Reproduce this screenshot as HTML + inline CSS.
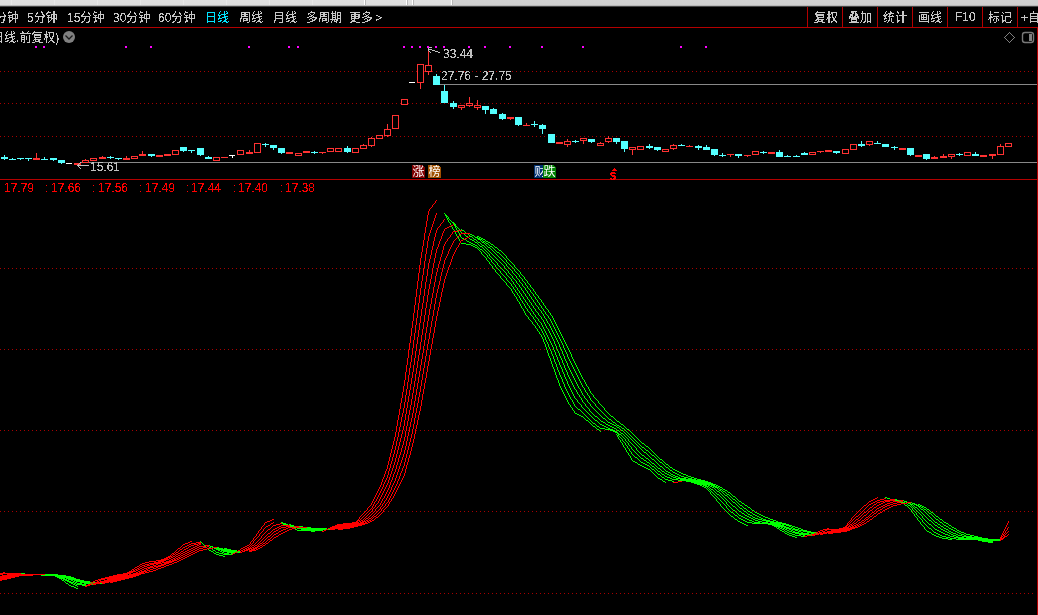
<!DOCTYPE html>
<html><head><meta charset="utf-8"><title>chart</title>
<style>
html,body{margin:0;padding:0;background:#000;}
body{width:1038px;height:615px;position:relative;overflow:hidden;font-family:"Liberation Sans","Noto Sans CJK SC",sans-serif;}
#top{position:absolute;left:0;top:0;width:1038px;height:8px;background:linear-gradient(#e0e0e0 0,#dedede 4.8px,#a8a8a8 5.8px,#383838 6.6px,#000 7.2px);}
#top i.f{background:#e7e7e7;box-shadow:none}
#top b{position:absolute;left:451px;top:0;width:587px;height:5px;background:rgba(0,0,0,0.06)}
#top i{position:absolute;top:0;width:1px;height:5px;background:#fff;box-shadow:1px 0 0 #b8b8b8}
svg{position:absolute;left:0;top:0}
#txt{position:absolute;left:0;top:0;width:1038px;height:615px;will-change:transform;filter:url(#thr)}
.t{position:absolute;font-size:12px;line-height:14px;white-space:nowrap;color:#c8c8c8;}
.tb{top:11px}
.cy{color:#00e4ff}
.n{position:absolute;font-size:12px;line-height:14px;white-space:nowrap;}
.b{position:absolute;top:165px;width:13px;height:13px;font-size:12px;line-height:15px;clip-path:polygon(0 0,10px 0,13px 3px,13px 13px,0 13px);color:#fff;overflow:hidden;text-align:center;white-space:nowrap}
</style></head><body>
<div id="top"><b></b><i class="f" style="left:11px"></i><i class="f" style="left:54px"></i><i class="f" style="left:97px"></i><i class="f" style="left:140px"></i><i class="f" style="left:183px"></i><i class="f" style="left:226px"></i><i class="f" style="left:269px"></i><i class="f" style="left:312px"></i><i style="left:364px"></i><i style="left:406px"></i><i style="left:412px"></i><i style="left:451px"></i></div>
<svg width="1038" height="615" viewBox="0 0 1038 615" shape-rendering="crispEdges">
<defs><filter id="thr" x="0" y="0" width="100%" height="100%" color-interpolation-filters="sRGB"><feComponentTransfer><feFuncA type="discrete" tableValues="0 0 0 0 1 1 1 1 1"/></feComponentTransfer></filter></defs>
<path d="M0 71.5H1033" stroke="#a80000" stroke-width="1" stroke-dasharray="1 3" fill="none"/>
<path d="M0 103.5H1033" stroke="#a80000" stroke-width="1" stroke-dasharray="1 3" fill="none"/>
<path d="M0 136.5H1033" stroke="#a80000" stroke-width="1" stroke-dasharray="1 3" fill="none"/>
<path d="M0 268.5H1033" stroke="#a80000" stroke-width="1" stroke-dasharray="1 3" fill="none"/>
<path d="M0 349.5H1033" stroke="#a80000" stroke-width="1" stroke-dasharray="1 3" fill="none"/>
<path d="M0 430.5H1033" stroke="#a80000" stroke-width="1" stroke-dasharray="1 3" fill="none"/>
<path d="M0 511.5H1033" stroke="#a80000" stroke-width="1" stroke-dasharray="1 3" fill="none"/>
<path d="M0 593.5H1033" stroke="#a80000" stroke-width="1" stroke-dasharray="1 3" fill="none"/>
<rect x="440" y="84" width="597" height="1" fill="#888888"/>
<rect x="81" y="162" width="956" height="1" fill="#888888"/>
<rect x="0" y="27" width="1038" height="1" fill="#b40000"/>
<rect x="0" y="179" width="1038" height="1" fill="#b40000"/>
<rect x="1037" y="27" width="1" height="588" fill="#b40000"/>
<rect x="807" y="7" width="1" height="20" fill="#b40000"/>
<rect x="842" y="7" width="1" height="20" fill="#b40000"/>
<rect x="877" y="7" width="1" height="20" fill="#b40000"/>
<rect x="912" y="7" width="1" height="20" fill="#b40000"/>
<rect x="947" y="7" width="1" height="20" fill="#b40000"/>
<rect x="982" y="7" width="1" height="20" fill="#b40000"/>
<rect x="1017" y="7" width="1" height="20" fill="#b40000"/>
<rect x="35" y="46" width="2" height="2" fill="#ff00ff"/>
<rect x="43" y="46" width="2" height="2" fill="#ff00ff"/>
<rect x="125" y="46" width="2" height="2" fill="#ff00ff"/>
<rect x="150" y="46" width="2" height="2" fill="#ff00ff"/>
<rect x="248" y="46" width="2" height="2" fill="#ff00ff"/>
<rect x="288" y="46" width="2" height="2" fill="#ff00ff"/>
<rect x="297" y="46" width="2" height="2" fill="#ff00ff"/>
<rect x="403" y="46" width="2" height="2" fill="#ff00ff"/>
<rect x="411" y="46" width="2" height="2" fill="#ff00ff"/>
<rect x="419" y="46" width="2" height="2" fill="#ff00ff"/>
<rect x="427" y="46" width="2" height="2" fill="#ff00ff"/>
<rect x="435" y="46" width="2" height="2" fill="#ff00ff"/>
<rect x="443" y="46" width="2" height="2" fill="#ff00ff"/>
<rect x="468" y="46" width="2" height="2" fill="#ff00ff"/>
<rect x="484" y="46" width="2" height="2" fill="#ff00ff"/>
<rect x="509" y="46" width="2" height="2" fill="#ff00ff"/>
<rect x="541" y="46" width="2" height="2" fill="#ff00ff"/>
<rect x="582" y="46" width="2" height="2" fill="#ff00ff"/>
<rect x="680" y="46" width="2" height="2" fill="#ff00ff"/>
<rect x="705" y="46" width="2" height="2" fill="#ff00ff"/>
<rect x="4" y="155" width="1" height="5" fill="#54ffff"/>
<rect x="1" y="157" width="7" height="2" fill="#54ffff"/>
<rect x="12" y="158" width="1" height="2" fill="#54ffff"/>
<rect x="9" y="159" width="7" height="1" fill="#54ffff"/>
<rect x="20" y="158" width="1" height="2" fill="#54ffff"/>
<rect x="17" y="158" width="7" height="1" fill="#54ffff"/>
<rect x="28" y="158" width="1" height="3" fill="#54ffff"/>
<rect x="25" y="158" width="7" height="1" fill="#54ffff"/>
<rect x="36" y="153" width="1" height="7" fill="#ff3232"/>
<rect x="33" y="158" width="7" height="2" fill="#ff3232"/>
<rect x="44" y="157" width="1" height="3" fill="#54ffff"/>
<rect x="41" y="159" width="7" height="1" fill="#54ffff"/>
<rect x="53" y="158" width="1" height="3" fill="#54ffff"/>
<rect x="50" y="158" width="7" height="2" fill="#54ffff"/>
<rect x="61" y="160" width="1" height="4" fill="#54ffff"/>
<rect x="58" y="160" width="7" height="3" fill="#54ffff"/>
<rect x="69" y="163" width="1" height="1" fill="#ffffff"/>
<rect x="66" y="163" width="6" height="1" fill="#ffffff"/>
<rect x="77" y="163" width="1" height="2" fill="#ff3232"/>
<rect x="74" y="163" width="7" height="2" fill="#ff3232"/>
<rect x="85" y="159" width="1" height="1" fill="#ff3232"/>
<rect x="82" y="160" width="7" height="3" fill="#ff3232"/>
<rect x="83" y="161" width="5" height="1" fill="#000"/>
<rect x="90" y="158" width="7" height="3" fill="#ff3232"/>
<rect x="91" y="159" width="5" height="1" fill="#000"/>
<rect x="102" y="156" width="1" height="3" fill="#ff3232"/>
<rect x="99" y="157" width="7" height="2" fill="#ff3232"/>
<rect x="110" y="156" width="1" height="3" fill="#54ffff"/>
<rect x="107" y="157" width="7" height="1" fill="#54ffff"/>
<rect x="118" y="158" width="1" height="2" fill="#54ffff"/>
<rect x="115" y="158" width="7" height="1" fill="#54ffff"/>
<rect x="126" y="156" width="1" height="4" fill="#ff3232"/>
<rect x="123" y="158" width="7" height="2" fill="#ff3232"/>
<rect x="131" y="156" width="7" height="3" fill="#ff3232"/>
<rect x="132" y="157" width="5" height="1" fill="#000"/>
<rect x="142" y="151" width="1" height="5" fill="#ff3232"/>
<rect x="139" y="154" width="7" height="2" fill="#ff3232"/>
<rect x="151" y="154" width="1" height="3" fill="#54ffff"/>
<rect x="148" y="154" width="7" height="2" fill="#54ffff"/>
<rect x="159" y="155" width="1" height="2" fill="#ff3232"/>
<rect x="156" y="155" width="7" height="2" fill="#ff3232"/>
<rect x="167" y="154" width="1" height="2" fill="#ff3232"/>
<rect x="164" y="154" width="7" height="2" fill="#ff3232"/>
<rect x="172" y="150" width="7" height="5" fill="#ff3232"/>
<rect x="173" y="151" width="5" height="3" fill="#000"/>
<rect x="183" y="147" width="1" height="5" fill="#54ffff"/>
<rect x="180" y="147" width="7" height="4" fill="#54ffff"/>
<rect x="191" y="150" width="1" height="3" fill="#54ffff"/>
<rect x="188" y="150" width="7" height="1" fill="#54ffff"/>
<rect x="200" y="148" width="1" height="8" fill="#54ffff"/>
<rect x="197" y="148" width="7" height="7" fill="#54ffff"/>
<rect x="208" y="156" width="1" height="3" fill="#54ffff"/>
<rect x="205" y="157" width="7" height="2" fill="#54ffff"/>
<rect x="213" y="157" width="7" height="4" fill="#ff3232"/>
<rect x="214" y="158" width="5" height="2" fill="#000"/>
<rect x="224" y="157" width="1" height="1" fill="#ff3232"/>
<rect x="221" y="157" width="7" height="1" fill="#ff3232"/>
<rect x="232" y="155" width="1" height="3" fill="#ffffff"/>
<rect x="229" y="155" width="6" height="1" fill="#ffffff"/>
<rect x="237" y="150" width="7" height="5" fill="#ff3232"/>
<rect x="238" y="151" width="5" height="3" fill="#000"/>
<rect x="249" y="150" width="1" height="4" fill="#ff3232"/>
<rect x="246" y="152" width="7" height="2" fill="#ff3232"/>
<rect x="254" y="143" width="7" height="10" fill="#ff3232"/>
<rect x="255" y="144" width="5" height="8" fill="#000"/>
<rect x="265" y="143" width="1" height="4" fill="#54ffff"/>
<rect x="262" y="144" width="7" height="1" fill="#54ffff"/>
<rect x="273" y="145" width="1" height="5" fill="#54ffff"/>
<rect x="270" y="145" width="7" height="3" fill="#54ffff"/>
<rect x="281" y="148" width="1" height="6" fill="#54ffff"/>
<rect x="278" y="148" width="7" height="5" fill="#54ffff"/>
<rect x="289" y="152" width="1" height="2" fill="#ff3232"/>
<rect x="286" y="152" width="7" height="2" fill="#ff3232"/>
<rect x="295" y="153" width="7" height="3" fill="#ff3232"/>
<rect x="296" y="154" width="5" height="1" fill="#000"/>
<rect x="306" y="151" width="1" height="2" fill="#ff3232"/>
<rect x="303" y="151" width="7" height="2" fill="#ff3232"/>
<rect x="314" y="151" width="1" height="3" fill="#54ffff"/>
<rect x="311" y="152" width="7" height="1" fill="#54ffff"/>
<rect x="322" y="152" width="1" height="2" fill="#ff3232"/>
<rect x="319" y="152" width="7" height="1" fill="#ff3232"/>
<rect x="327" y="148" width="7" height="4" fill="#ff3232"/>
<rect x="328" y="149" width="5" height="2" fill="#000"/>
<rect x="335" y="148" width="7" height="4" fill="#ff3232"/>
<rect x="336" y="149" width="5" height="2" fill="#000"/>
<rect x="347" y="146" width="1" height="7" fill="#54ffff"/>
<rect x="344" y="148" width="7" height="4" fill="#54ffff"/>
<rect x="352" y="148" width="7" height="5" fill="#ff3232"/>
<rect x="353" y="149" width="5" height="3" fill="#000"/>
<rect x="363" y="144" width="1" height="1" fill="#ff3232"/>
<rect x="360" y="145" width="7" height="4" fill="#ff3232"/>
<rect x="361" y="146" width="5" height="2" fill="#000"/>
<rect x="371" y="137" width="1" height="1" fill="#ff3232"/>
<rect x="371" y="146" width="1" height="1" fill="#ff3232"/>
<rect x="368" y="138" width="7" height="8" fill="#ff3232"/>
<rect x="369" y="139" width="5" height="6" fill="#000"/>
<rect x="376" y="135" width="7" height="4" fill="#ff3232"/>
<rect x="377" y="136" width="5" height="2" fill="#000"/>
<rect x="387" y="124" width="1" height="5" fill="#ff3232"/>
<rect x="387" y="136" width="1" height="1" fill="#ff3232"/>
<rect x="384" y="129" width="7" height="7" fill="#ff3232"/>
<rect x="385" y="130" width="5" height="5" fill="#000"/>
<rect x="392" y="115" width="7" height="14" fill="#ff3232"/>
<rect x="393" y="116" width="5" height="12" fill="#000"/>
<rect x="401" y="99" width="7" height="6" fill="#ff3232"/>
<rect x="402" y="100" width="5" height="4" fill="#000"/>
<rect x="412" y="82" width="1" height="1" fill="#ffffff"/>
<rect x="409" y="82" width="6" height="1" fill="#ffffff"/>
<rect x="420" y="83" width="1" height="6" fill="#ff3232"/>
<rect x="417" y="64" width="7" height="19" fill="#ff3232"/>
<rect x="418" y="65" width="5" height="17" fill="#000"/>
<rect x="428" y="48" width="1" height="17" fill="#ff3232"/>
<rect x="428" y="72" width="1" height="3" fill="#ff3232"/>
<rect x="425" y="65" width="7" height="7" fill="#ff3232"/>
<rect x="426" y="66" width="5" height="5" fill="#000"/>
<rect x="436" y="74" width="1" height="11" fill="#54ffff"/>
<rect x="433" y="76" width="7" height="9" fill="#54ffff"/>
<rect x="444" y="85" width="1" height="18" fill="#54ffff"/>
<rect x="441" y="91" width="7" height="12" fill="#54ffff"/>
<rect x="453" y="101" width="1" height="8" fill="#54ffff"/>
<rect x="450" y="103" width="7" height="4" fill="#54ffff"/>
<rect x="461" y="108" width="1" height="2" fill="#ff3232"/>
<rect x="458" y="105" width="7" height="3" fill="#ff3232"/>
<rect x="459" y="106" width="5" height="1" fill="#000"/>
<rect x="469" y="97" width="1" height="6" fill="#ff3232"/>
<rect x="469" y="106" width="1" height="1" fill="#ff3232"/>
<rect x="466" y="103" width="7" height="3" fill="#ff3232"/>
<rect x="467" y="104" width="5" height="1" fill="#000"/>
<rect x="477" y="100" width="1" height="5" fill="#ff3232"/>
<rect x="477" y="108" width="1" height="2" fill="#ff3232"/>
<rect x="474" y="105" width="7" height="3" fill="#ff3232"/>
<rect x="475" y="106" width="5" height="1" fill="#000"/>
<rect x="485" y="106" width="1" height="8" fill="#54ffff"/>
<rect x="482" y="106" width="7" height="4" fill="#54ffff"/>
<rect x="493" y="108" width="1" height="6" fill="#54ffff"/>
<rect x="490" y="109" width="7" height="5" fill="#54ffff"/>
<rect x="502" y="113" width="1" height="7" fill="#54ffff"/>
<rect x="499" y="114" width="7" height="5" fill="#54ffff"/>
<rect x="510" y="117" width="1" height="3" fill="#ff3232"/>
<rect x="507" y="117" width="7" height="2" fill="#ff3232"/>
<rect x="518" y="117" width="1" height="9" fill="#54ffff"/>
<rect x="515" y="117" width="7" height="8" fill="#54ffff"/>
<rect x="526" y="123" width="1" height="3" fill="#ff3232"/>
<rect x="523" y="125" width="7" height="1" fill="#ff3232"/>
<rect x="534" y="121" width="1" height="6" fill="#54ffff"/>
<rect x="531" y="124" width="7" height="1" fill="#54ffff"/>
<rect x="542" y="124" width="1" height="10" fill="#54ffff"/>
<rect x="539" y="125" width="7" height="4" fill="#54ffff"/>
<rect x="551" y="134" width="1" height="9" fill="#54ffff"/>
<rect x="548" y="134" width="7" height="9" fill="#54ffff"/>
<rect x="559" y="142" width="1" height="2" fill="#ff3232"/>
<rect x="556" y="142" width="7" height="2" fill="#ff3232"/>
<rect x="567" y="139" width="1" height="2" fill="#ff3232"/>
<rect x="567" y="145" width="1" height="2" fill="#ff3232"/>
<rect x="564" y="141" width="7" height="4" fill="#ff3232"/>
<rect x="565" y="142" width="5" height="2" fill="#000"/>
<rect x="575" y="140" width="1" height="3" fill="#54ffff"/>
<rect x="572" y="141" width="7" height="1" fill="#54ffff"/>
<rect x="583" y="141" width="1" height="3" fill="#ff3232"/>
<rect x="580" y="138" width="7" height="3" fill="#ff3232"/>
<rect x="581" y="139" width="5" height="1" fill="#000"/>
<rect x="591" y="139" width="1" height="4" fill="#54ffff"/>
<rect x="588" y="139" width="7" height="3" fill="#54ffff"/>
<rect x="600" y="142" width="1" height="1" fill="#ff3232"/>
<rect x="597" y="143" width="7" height="3" fill="#ff3232"/>
<rect x="598" y="144" width="5" height="1" fill="#000"/>
<rect x="608" y="136" width="1" height="2" fill="#ff3232"/>
<rect x="608" y="142" width="1" height="1" fill="#ff3232"/>
<rect x="605" y="138" width="7" height="4" fill="#ff3232"/>
<rect x="606" y="139" width="5" height="2" fill="#000"/>
<rect x="616" y="138" width="1" height="6" fill="#54ffff"/>
<rect x="613" y="138" width="7" height="4" fill="#54ffff"/>
<rect x="624" y="141" width="1" height="11" fill="#54ffff"/>
<rect x="621" y="141" width="7" height="8" fill="#54ffff"/>
<rect x="632" y="150" width="1" height="5" fill="#ff3232"/>
<rect x="629" y="147" width="7" height="3" fill="#ff3232"/>
<rect x="630" y="148" width="5" height="1" fill="#000"/>
<rect x="637" y="146" width="7" height="4" fill="#ff3232"/>
<rect x="638" y="147" width="5" height="2" fill="#000"/>
<rect x="649" y="144" width="1" height="5" fill="#54ffff"/>
<rect x="646" y="146" width="7" height="2" fill="#54ffff"/>
<rect x="657" y="147" width="1" height="4" fill="#54ffff"/>
<rect x="654" y="147" width="7" height="3" fill="#54ffff"/>
<rect x="662" y="149" width="7" height="3" fill="#ff3232"/>
<rect x="663" y="150" width="5" height="1" fill="#000"/>
<rect x="673" y="144" width="1" height="1" fill="#ff3232"/>
<rect x="673" y="149" width="1" height="1" fill="#ff3232"/>
<rect x="670" y="145" width="7" height="4" fill="#ff3232"/>
<rect x="671" y="146" width="5" height="2" fill="#000"/>
<rect x="681" y="144" width="1" height="2" fill="#54ffff"/>
<rect x="678" y="145" width="7" height="1" fill="#54ffff"/>
<rect x="689" y="145" width="1" height="2" fill="#ff3232"/>
<rect x="686" y="146" width="7" height="1" fill="#ff3232"/>
<rect x="698" y="145" width="1" height="5" fill="#54ffff"/>
<rect x="695" y="146" width="7" height="2" fill="#54ffff"/>
<rect x="706" y="145" width="1" height="5" fill="#54ffff"/>
<rect x="703" y="147" width="7" height="3" fill="#54ffff"/>
<rect x="714" y="149" width="1" height="7" fill="#54ffff"/>
<rect x="711" y="149" width="7" height="6" fill="#54ffff"/>
<rect x="722" y="153" width="1" height="4" fill="#54ffff"/>
<rect x="719" y="155" width="7" height="1" fill="#54ffff"/>
<rect x="730" y="154" width="1" height="3" fill="#ff3232"/>
<rect x="727" y="154" width="7" height="1" fill="#ff3232"/>
<rect x="738" y="154" width="1" height="4" fill="#54ffff"/>
<rect x="735" y="154" width="7" height="2" fill="#54ffff"/>
<rect x="747" y="155" width="1" height="2" fill="#ff3232"/>
<rect x="744" y="155" width="7" height="1" fill="#ff3232"/>
<rect x="752" y="151" width="7" height="4" fill="#ff3232"/>
<rect x="753" y="152" width="5" height="2" fill="#000"/>
<rect x="763" y="151" width="1" height="3" fill="#54ffff"/>
<rect x="760" y="152" width="7" height="1" fill="#54ffff"/>
<rect x="771" y="152" width="1" height="2" fill="#ff3232"/>
<rect x="768" y="152" width="7" height="2" fill="#ff3232"/>
<rect x="779" y="150" width="1" height="7" fill="#54ffff"/>
<rect x="776" y="152" width="7" height="5" fill="#54ffff"/>
<rect x="787" y="155" width="1" height="2" fill="#54ffff"/>
<rect x="784" y="156" width="7" height="1" fill="#54ffff"/>
<rect x="796" y="155" width="1" height="2" fill="#54ffff"/>
<rect x="793" y="156" width="7" height="1" fill="#54ffff"/>
<rect x="804" y="152" width="1" height="3" fill="#54ffff"/>
<rect x="801" y="153" width="7" height="2" fill="#54ffff"/>
<rect x="809" y="152" width="7" height="3" fill="#ff3232"/>
<rect x="810" y="153" width="5" height="1" fill="#000"/>
<rect x="820" y="151" width="1" height="2" fill="#ff3232"/>
<rect x="817" y="151" width="7" height="1" fill="#ff3232"/>
<rect x="828" y="150" width="1" height="2" fill="#ff3232"/>
<rect x="825" y="150" width="7" height="2" fill="#ff3232"/>
<rect x="836" y="151" width="1" height="3" fill="#54ffff"/>
<rect x="833" y="151" width="7" height="2" fill="#54ffff"/>
<rect x="842" y="149" width="7" height="5" fill="#ff3232"/>
<rect x="843" y="150" width="5" height="3" fill="#000"/>
<rect x="850" y="144" width="7" height="6" fill="#ff3232"/>
<rect x="851" y="145" width="5" height="4" fill="#000"/>
<rect x="861" y="141" width="1" height="6" fill="#54ffff"/>
<rect x="858" y="144" width="7" height="2" fill="#54ffff"/>
<rect x="869" y="145" width="1" height="1" fill="#ff3232"/>
<rect x="866" y="141" width="7" height="4" fill="#ff3232"/>
<rect x="867" y="142" width="5" height="2" fill="#000"/>
<rect x="877" y="141" width="1" height="3" fill="#54ffff"/>
<rect x="874" y="143" width="7" height="1" fill="#54ffff"/>
<rect x="885" y="144" width="1" height="3" fill="#54ffff"/>
<rect x="882" y="144" width="7" height="3" fill="#54ffff"/>
<rect x="894" y="146" width="1" height="4" fill="#54ffff"/>
<rect x="891" y="147" width="7" height="1" fill="#54ffff"/>
<rect x="902" y="148" width="1" height="2" fill="#ff3232"/>
<rect x="899" y="148" width="7" height="2" fill="#ff3232"/>
<rect x="910" y="148" width="1" height="8" fill="#54ffff"/>
<rect x="907" y="148" width="7" height="7" fill="#54ffff"/>
<rect x="918" y="155" width="1" height="2" fill="#ff3232"/>
<rect x="915" y="155" width="7" height="2" fill="#ff3232"/>
<rect x="926" y="154" width="1" height="6" fill="#54ffff"/>
<rect x="923" y="154" width="7" height="5" fill="#54ffff"/>
<rect x="934" y="156" width="1" height="3" fill="#ff3232"/>
<rect x="931" y="157" width="7" height="2" fill="#ff3232"/>
<rect x="943" y="154" width="1" height="4" fill="#ff3232"/>
<rect x="940" y="156" width="7" height="2" fill="#ff3232"/>
<rect x="951" y="157" width="1" height="2" fill="#ff3232"/>
<rect x="948" y="154" width="7" height="3" fill="#ff3232"/>
<rect x="949" y="155" width="5" height="1" fill="#000"/>
<rect x="959" y="153" width="1" height="3" fill="#54ffff"/>
<rect x="956" y="154" width="7" height="1" fill="#54ffff"/>
<rect x="964" y="152" width="7" height="4" fill="#ff3232"/>
<rect x="965" y="153" width="5" height="2" fill="#000"/>
<rect x="975" y="152" width="1" height="4" fill="#54ffff"/>
<rect x="972" y="154" width="7" height="2" fill="#54ffff"/>
<rect x="983" y="155" width="1" height="2" fill="#ff3232"/>
<rect x="980" y="155" width="7" height="2" fill="#ff3232"/>
<rect x="992" y="154" width="1" height="5" fill="#ff3232"/>
<rect x="989" y="154" width="7" height="2" fill="#ff3232"/>
<rect x="1000" y="144" width="1" height="2" fill="#ff3232"/>
<rect x="997" y="146" width="7" height="9" fill="#ff3232"/>
<rect x="998" y="147" width="5" height="7" fill="#000"/>
<rect x="1005" y="143" width="7" height="4" fill="#ff3232"/>
<rect x="1006" y="144" width="5" height="2" fill="#000"/>
<path d="M21 573.5h4M41 575.5h25M45 574.5h13M55 576.5h16M57 577.5h17M59 578.5h6M61 579.5h1M62 580.5h2M63 579.5h4M64 581.5h1M65 580.5h4M65 582.5h1M66 578.5h10M66 583.5h2M67 581.5h4M68 579.5h12M68 584.5h1M69 582.5h5M69 585.5h2M71 580.5h2M71 583.5h2M71 586.5h3M73 581.5h2M73 584.5h2M74 580.5h10M74 583.5h2M74 587.5h2M75 582.5h2M75 585.5h2M76 581.5h14M76 584.5h10M76 588.5h2M77 583.5h5M77 586.5h1M80 582.5h11M82 585.5h4M84 583.5h6M91 583.5h1M92 584.5h1M93 582.5h2M100 583.5h2M200 541.5h1M201 542.5h1M202 543.5h1M203 544.5h1M204 545.5h1M205 546.5h1M208 549.5h1M209 545.5h1M209 547.5h2M209 550.5h2M210 546.5h3M211 551.5h2M212 547.5h1M212 549.5h1M213 550.5h2M213 552.5h1M214 548.5h9M214 553.5h2M215 551.5h1M216 549.5h15M216 552.5h3M216 554.5h3M217 547.5h2M218 550.5h2M219 553.5h4M219 555.5h4M220 551.5h2M221 550.5h16M222 552.5h2M223 551.5h14M223 554.5h9M223 556.5h2M224 548.5h3M224 553.5h5M227 552.5h8M231 553.5h2M237 552.5h3M238 551.5h2M281 522.5h2M282 523.5h4M283 524.5h5M289 524.5h2M290 525.5h4M290 526.5h4M294 527.5h2M295 529.5h2M297 528.5h30M297 530.5h26M299 526.5h4M301 529.5h25M307 527.5h4M311 531.5h4M328 529.5h2M444 213.5h1M445.5 214v2M446.5 215v3M447 216.5h1M447 218.5h2M447 219.5h1M448 217.5h1M448.5 220v2M449 219.5h1M449 222.5h1M450 220.5h1M450.5 223v2M451 221.5h1M451 226.5h1M452 222.5h2M452.5 227v2M453 223.5h2M453 229.5h1M454 224.5h2M454 225.5h2M454 230.5h1M455 226.5h2M455 227.5h1M455.5 232v2M456.5 228v2M456.5 234v2M457 227.5h1M457 230.5h1M457 236.5h1M458 228.5h1M458.5 231v2M458.5 237v2M459 229.5h1M459.5 233v2M459.5 239v2M460 231.5h1M460.5 235v2M461 229.5h1M461 232.5h1M461 237.5h1M461 243.5h5M462 230.5h2M462 238.5h2M464 231.5h1M464 234.5h1M465 232.5h1M465 235.5h1M465 239.5h1M466 236.5h2M466 240.5h1M466 244.5h5M467 241.5h2M468 234.5h1M469 235.5h1M469 238.5h1M469 242.5h2M470 234.5h2M470 236.5h2M470 239.5h2M471 243.5h2M471 245.5h2M472 235.5h2M472 237.5h1M472 240.5h2M473 238.5h1M473 244.5h2M473 246.5h2M474 236.5h1M474 239.5h2M474 241.5h1M475 237.5h3M475 242.5h2M475 245.5h2M475 247.5h2M476 240.5h1M477 236.5h2M477 238.5h3M477 241.5h1M477 243.5h1M477 246.5h1M477 248.5h1M478 239.5h4M478 242.5h2M478 244.5h1M478 247.5h1M478 249.5h1M479 237.5h2M479 245.5h1M479 248.5h1M479 250.5h1M480 240.5h1M480 243.5h1M480 246.5h2M480 249.5h2M480 251.5h1M481 238.5h2M481 241.5h1M481 244.5h1M481.5 252v2M482 240.5h1M482 242.5h2M482 245.5h2M482 247.5h1M482 250.5h1M482 254.5h1M483 239.5h2M483 241.5h2M483 248.5h1M483 251.5h1M483 255.5h1M484 243.5h1M484 246.5h1M484 249.5h1M484 252.5h1M484 256.5h1M485 240.5h1M485 242.5h1M485 244.5h1M485 247.5h1M485 250.5h1M485 253.5h1M485 257.5h1M486 241.5h2M486 243.5h2M486 245.5h1M486 248.5h1M486 251.5h1M486 254.5h1M486.5 258v2M487 246.5h1M487 249.5h1M487 252.5h1M487.5 255v2M487 260.5h1M488 242.5h2M488 244.5h1M488 247.5h2M488 250.5h1M488 253.5h1M488 257.5h1M488 261.5h1M489 245.5h1M489 251.5h1M489.5 254v2M489 258.5h1M489.5 262v2M490 243.5h1M490 246.5h2M490 248.5h1M490 252.5h1M490 256.5h1M490 259.5h1M490 264.5h1M491 244.5h2M491 249.5h1M491 253.5h1M491 257.5h1M491.5 260v2M491 265.5h1M492 247.5h1M492 250.5h1M492 254.5h1M492 258.5h1M492 262.5h1M492.5 266v2M493 245.5h1M493 248.5h1M493 251.5h1M493 255.5h1M493 259.5h1M493 263.5h1M493 268.5h1M494 246.5h1M494 249.5h1M494 252.5h1M494 256.5h1M494 260.5h1M494 264.5h1M494 269.5h1M495 247.5h2M495 250.5h1M495 253.5h1M495 257.5h1M495 261.5h1M495.5 265v2M495.5 270v2M496 251.5h1M496 254.5h1M496 258.5h1M496 262.5h1M496 267.5h1M496 272.5h1M497 248.5h1M497 252.5h2M497 255.5h1M497 259.5h1M497.5 263v2M497 268.5h1M497 273.5h1M498 249.5h1M498 256.5h1M498 260.5h1M498 265.5h1M498 269.5h1M498 274.5h1M499 250.5h2M499 253.5h1M499 257.5h1M499 261.5h1M499 266.5h1M499 270.5h1M499 275.5h1M500 254.5h1M500 258.5h1M500 262.5h1M500 267.5h1M500.5 271v2M500.5 276v2M501 251.5h1M501 255.5h1M501 259.5h1M501 263.5h1M501 268.5h1M501 273.5h1M501 278.5h1M502 252.5h1M502 256.5h1M502 260.5h1M502 264.5h1M502 269.5h1M502 274.5h1M502 279.5h1M503 253.5h1M503 257.5h1M503 261.5h1M503 265.5h1M503 270.5h1M503 275.5h1M503 280.5h1M504 254.5h1M504 258.5h1M504 262.5h1M504.5 266v2M504 271.5h1M504 276.5h1M504 281.5h1M505 255.5h1M505 259.5h1M505 263.5h1M505 268.5h1M505 272.5h1M505 277.5h1M505 282.5h1M506.5 256v2M506.5 260v2M506.5 264v2M506 269.5h1M506.5 273v2M506.5 278v2M506.5 283v2M507 258.5h1M507 262.5h1M507 266.5h1M507 270.5h1M507 275.5h1M507 280.5h1M507 285.5h1M508 259.5h1M508 263.5h1M508 267.5h1M508.5 271v2M508 276.5h1M508 281.5h1M508 286.5h1M509 260.5h1M509 264.5h1M509 268.5h1M509 273.5h1M509 277.5h1M509 282.5h1M509 287.5h1M510 261.5h1M510 265.5h1M510 269.5h1M510 274.5h1M510 278.5h1M510 283.5h1M510 288.5h1M511 262.5h1M511 266.5h1M511 270.5h1M511 275.5h1M511.5 279v2M511.5 284v2M511.5 289v2M512 263.5h1M512 267.5h1M512.5 271v2M512.5 276v2M512 281.5h1M512 286.5h1M512.5 291v2M513 264.5h1M513 268.5h1M513 273.5h1M513 278.5h1M513.5 282v2M513.5 287v2M513 293.5h1M514.5 265v2M514.5 269v2M514 274.5h1M514 279.5h1M514 284.5h1M514 289.5h1M514.5 294v2M515 267.5h1M515 271.5h1M515 275.5h1M515 280.5h1M515.5 285v2M515.5 290v2M515 296.5h1M516 268.5h1M516 272.5h1M516.5 276v2M516.5 281v2M516 287.5h1M516 292.5h1M516.5 297v2M517 269.5h1M517 273.5h1M517 278.5h1M517 283.5h1M517.5 288v2M517.5 293v2M517.5 299v2M518 270.5h1M518 274.5h1M518 279.5h1M518 284.5h1M518 290.5h1M518 295.5h1M518 301.5h1M519 271.5h1M519.5 275v2M519.5 280v2M519.5 285v2M519.5 291v2M519.5 296v2M519.5 302v2M520.5 272v2M520 277.5h1M520 282.5h1M520 287.5h1M520 293.5h1M520.5 298v2M520.5 304v2M521 274.5h1M521 278.5h1M521 283.5h1M521.5 288v2M521.5 294v2M521 300.5h1M521.5 306v2M522 275.5h1M522.5 279v2M522.5 284v2M522 290.5h1M522 296.5h1M522.5 301v2M522 308.5h1M523 276.5h1M523 281.5h1M523 286.5h1M523.5 291v2M523.5 297v2M523 303.5h1M523.5 309v2M524.5 277v2M524 282.5h1M524 287.5h1M524 293.5h1M524 299.5h1M524.5 304v2M524.5 311v2M525 279.5h1M525.5 283v2M525.5 288v2M525.5 294v2M525.5 300v2M525.5 306v2M525.5 313v2M526 280.5h1M526 285.5h1M526 290.5h1M526 296.5h1M526 302.5h1M526 308.5h1M526 315.5h1M527.5 281v2M527.5 286v2M527.5 291v2M527.5 297v2M527.5 303v2M527.5 309v2M527 316.5h1M528 283.5h1M528 288.5h1M528 293.5h1M528 299.5h1M528 305.5h1M528 311.5h1M528.5 317v2M529 284.5h1M529 289.5h1M529.5 294v2M529.5 300v2M529.5 306v2M529 312.5h1M529 319.5h1M530.5 285v2M530.5 290v2M530 296.5h1M530 302.5h1M530 308.5h1M530.5 313v2M530 320.5h1M531 287.5h1M531 292.5h1M531.5 297v2M531.5 303v2M531.5 309v2M531 315.5h1M531 321.5h1M532 288.5h1M532 293.5h1M532 299.5h1M532 305.5h1M532 311.5h1M532 316.5h1M532.5 322v2M533.5 289v2M533.5 294v2M533.5 300v2M533.5 306v2M533.5 312v2M533.5 317v2M533 324.5h1M534 291.5h1M534 296.5h1M534 302.5h1M534 308.5h1M534 314.5h1M534 319.5h1M534 325.5h1M535.5 292v2M535.5 297v2M535.5 303v2M535.5 309v2M535.5 315v2M535.5 320v2M535.5 326v2M536 294.5h1M536 299.5h1M536 305.5h1M536 311.5h1M536 317.5h1M536 322.5h1M536 328.5h1M537 295.5h1M537.5 300v2M537 306.5h1M537 312.5h1M537 318.5h1M537.5 323v2M537.5 329v2M538.5 296v2M538 302.5h1M538.5 307v2M538.5 313v2M538.5 319v2M538 325.5h1M538 331.5h1M539 298.5h1M539.5 303v2M539 309.5h1M539 315.5h1M539 321.5h1M539.5 326v2M539.5 332v2M540 299.5h1M540 305.5h1M540 310.5h1M540 316.5h1M540 322.5h1M540 328.5h1M540 334.5h1M541.5 300v2M541.5 306v2M541.5 311v2M541.5 317v2M541.5 323v2M541.5 329v2M541.5 335v2M542 302.5h1M542 308.5h1M542 313.5h1M542 319.5h1M542.5 325v2M542.5 331v2M542.5 337v2M543.5 303v2M543.5 309v2M543.5 314v2M543.5 320v2M543.5 327v2M543.5 333v2M543.5 339v3M544 305.5h1M544 311.5h1M544.5 316v2M544.5 322v2M544.5 329v2M544.5 335v2M544.5 342v2M545.5 306v2M545.5 312v2M545 318.5h1M545.5 324v2M545.5 331v2M545.5 337v3M545.5 344v3M546 308.5h1M546 314.5h1M546.5 319v2M546.5 326v2M546.5 333v2M546.5 340v2M546.5 347v3M547 309.5h1M547 315.5h1M547.5 321v2M547 328.5h1M547.5 335v2M547.5 342v2M547.5 350v3M548.5 310v2M548.5 316v2M548 323.5h1M548.5 329v2M548.5 337v2M548.5 344v3M548.5 353v3M549 312.5h1M549 318.5h1M549.5 324v2M549.5 331v2M549.5 339v2M549.5 347v2M549.5 356v2M550.5 313v2M550.5 319v2M550.5 326v2M550.5 333v2M550.5 341v2M550.5 349v2M550.5 358v3M551 315.5h1M551.5 321v2M551.5 328v2M551.5 335v2M551.5 343v2M551.5 351v3M551.5 361v3M552.5 316v2M552.5 323v2M552.5 330v2M552.5 337v2M552.5 345v2M552.5 354v2M552.5 364v3M553.5 318v2M553.5 325v2M553.5 332v2M553.5 339v2M553.5 347v3M553.5 356v3M553.5 367v2M554.5 320v2M554.5 327v2M554.5 334v2M554.5 341v3M554.5 350v2M554.5 359v3M554.5 369v3M555.5 322v2M555.5 329v2M555.5 336v2M555.5 344v2M555.5 352v3M555.5 362v2M555.5 372v3M556.5 324v2M556.5 331v2M556.5 338v2M556.5 346v3M556.5 355v2M556.5 364v3M556.5 375v3M557.5 326v2M557.5 333v2M557.5 340v2M557.5 349v2M557.5 357v3M557.5 367v3M557.5 378v2M558.5 328v2M558.5 335v2M558.5 342v2M558.5 351v2M558.5 360v2M558.5 370v2M558.5 380v3M559.5 330v2M559.5 337v2M559.5 344v3M559.5 353v3M559.5 362v3M559.5 372v3M559.5 383v3M560.5 332v2M560.5 339v2M560.5 347v2M560.5 356v2M560.5 365v2M560.5 375v2M560.5 386v2M561.5 334v2M561.5 341v2M561.5 349v2M561.5 358v2M561.5 367v2M561.5 377v2M561.5 388v2M562.5 336v2M562.5 343v2M562.5 351v3M562.5 360v3M562.5 369v3M562.5 379v3M562.5 390v2M563.5 338v2M563.5 345v3M563.5 354v2M563.5 363v2M563.5 372v2M563.5 382v2M563.5 392v2M564.5 340v2M564.5 348v2M564.5 356v3M564.5 365v3M564.5 374v3M564.5 384v3M564.5 394v2M565.5 342v2M565.5 350v2M565.5 359v2M565.5 368v2M565.5 377v2M565.5 387v2M565.5 396v2M566.5 344v2M566.5 352v2M566.5 361v2M566.5 370v2M566.5 379v2M566.5 389v2M566.5 398v2M567.5 346v2M567.5 354v3M567.5 363v3M567.5 372v3M567.5 381v3M567.5 391v2M567.5 400v2M568.5 348v2M568.5 357v2M568.5 366v2M568.5 375v2M568.5 384v2M568.5 393v2M568.5 402v2M569.5 350v2M569.5 359v2M569.5 368v2M569.5 377v2M569.5 386v2M569.5 395v2M569 404.5h1M570.5 352v2M570.5 361v2M570.5 370v2M570.5 379v2M570.5 388v2M570.5 397v2M570.5 405v2M571.5 354v3M571.5 363v2M571.5 372v2M571.5 381v2M571.5 390v2M571 399.5h1M571 407.5h1M572.5 357v2M572.5 365v2M572.5 374v2M572.5 383v2M572.5 392v2M572.5 400v2M572.5 408v2M573.5 359v2M573.5 367v2M573.5 376v2M573.5 385v2M573.5 394v2M573.5 402v2M573 410.5h1M574.5 361v2M574.5 369v2M574.5 378v2M574.5 387v2M574.5 396v2M574.5 404v2M574.5 411v2M575.5 363v2M575.5 371v2M575.5 380v2M575 389.5h1M575 398.5h1M575 406.5h1M575 413.5h2M576.5 365v2M576.5 373v2M576.5 382v2M576.5 390v2M576 399.5h1M576 407.5h1M577.5 367v2M577.5 375v2M577.5 384v2M577.5 392v2M577.5 400v2M577 408.5h1M577 414.5h2M578.5 369v2M578.5 377v2M578.5 386v2M578 394.5h1M578 402.5h1M578 409.5h2M579.5 371v2M579.5 379v2M579 388.5h1M579.5 395v2M579 403.5h1M579 415.5h2M580.5 373v2M580.5 381v2M580.5 389v2M580 397.5h1M580 404.5h1M580 410.5h1M581.5 375v2M581.5 383v2M581.5 391v2M581.5 398v2M581.5 405v2M581 411.5h1M581 416.5h2M582.5 377v2M582.5 385v2M582.5 393v2M582.5 400v2M582 407.5h1M582 412.5h1M583 379.5h1M583 387.5h1M583 395.5h1M583 402.5h1M583 408.5h1M583 413.5h1M583 417.5h1M584.5 380v2M584.5 388v2M584.5 396v2M584 403.5h1M584 409.5h1M584 414.5h1M584 418.5h1M585.5 382v2M585.5 390v2M585 398.5h1M585.5 404v2M585 410.5h1M585 415.5h1M585 419.5h1M586.5 384v2M586 392.5h1M586 399.5h1M586 406.5h1M586 411.5h1M586 416.5h1M586 420.5h2M587 386.5h1M587.5 393v2M587.5 400v2M587 407.5h1M587 412.5h1M587 417.5h1M588.5 387v2M588 395.5h1M588 402.5h1M588 408.5h1M588 413.5h1M588 418.5h1M588 421.5h1M589.5 389v2M589.5 396v2M589 403.5h1M589.5 409v2M589 414.5h1M589 419.5h1M589 422.5h1M590.5 391v2M590.5 398v2M590.5 404v2M590 411.5h1M590 415.5h1M590 420.5h1M590 423.5h1M591 393.5h1M591 400.5h1M591 406.5h1M591 412.5h1M591 416.5h1M591 421.5h1M591 424.5h1M592 394.5h1M592 401.5h1M592 407.5h1M592 413.5h1M592 417.5h1M592 422.5h1M592 425.5h1M593.5 395v2M593 402.5h1M593 408.5h1M593 414.5h1M593 418.5h1M593 423.5h2M593 426.5h2M594 397.5h1M594 403.5h1M594 409.5h1M594 415.5h1M594 419.5h1M595 398.5h1M595.5 404v2M595 410.5h1M595 416.5h2M595 420.5h2M595 424.5h1M595 427.5h1M596 399.5h1M596 406.5h1M596 411.5h1M596 425.5h1M596 428.5h1M597 400.5h1M597 407.5h1M597 412.5h1M597 417.5h1M597 421.5h1M597 426.5h2M597 429.5h2M598.5 401v2M598 408.5h1M598 413.5h1M598 418.5h1M598 422.5h1M599 403.5h1M599 409.5h1M599 414.5h1M599 419.5h1M599 423.5h1M599 427.5h1M599 430.5h1M600 404.5h1M600 410.5h1M600 415.5h1M600 420.5h1M600 424.5h2M600 428.5h5M600 431.5h1M601 405.5h1M601 411.5h1M601 416.5h1M601 421.5h2M602 406.5h1M602 412.5h1M602 417.5h1M602 425.5h2M603 407.5h1M603 413.5h1M603 418.5h2M603 422.5h2M604.5 408v2M604 414.5h1M604 426.5h2M605 410.5h1M605 415.5h1M605 419.5h1M605 423.5h1M605 429.5h8M606 411.5h1M606 416.5h1M606 420.5h1M606 424.5h2M606 427.5h2M607 412.5h1M607 417.5h1M607 421.5h1M608 413.5h1M608 418.5h1M608 422.5h2M608 425.5h2M608 428.5h2M609 414.5h1M609 419.5h2M610 415.5h1M610 423.5h2M610 426.5h2M610 430.5h5M611 416.5h2M611 420.5h1M612 421.5h1M612 424.5h2M612 427.5h2M613 417.5h1M613 422.5h2M613 431.5h4M614 418.5h1M614 425.5h2M614 428.5h2M615 419.5h1M615 423.5h1M615 432.5h3M616 420.5h1M616 424.5h1M616 426.5h1M616 429.5h1M616 434.5h1M617 421.5h2M617 425.5h2M617 427.5h2M617 430.5h2M617 433.5h2M617 435.5h2M617 436.5h1M618 434.5h3M618.5 437v2M619 422.5h1M619 426.5h2M619 428.5h1M619 431.5h1M619 436.5h1M619 439.5h1M620 423.5h1M620 429.5h1M620 432.5h1M620 437.5h1M620.5 440v2M621 424.5h2M621 427.5h1M621 430.5h2M621 433.5h2M621 435.5h1M621 438.5h1M621 442.5h1M622 428.5h2M622 436.5h1M622.5 439v2M622.5 443v2M623 425.5h1M623 431.5h1M623 434.5h1M623 437.5h1M623 441.5h1M623.5 445v2M624 426.5h1M624 429.5h1M624 432.5h1M624 435.5h1M624 438.5h1M624 442.5h1M624 447.5h1M625 427.5h1M625 430.5h1M625 433.5h1M625 436.5h1M625.5 439v2M625.5 443v2M625.5 448v2M626 428.5h1M626 431.5h1M626 434.5h1M626 437.5h1M626 441.5h1M626 445.5h1M626.5 450v2M627 429.5h2M627 432.5h1M627 435.5h1M627 438.5h1M627 442.5h1M627.5 446v2M627 452.5h1M628 433.5h1M628 436.5h1M628.5 439v2M628.5 443v2M628 448.5h1M628.5 453v2M629 430.5h1M629 434.5h1M629 437.5h1M629 441.5h1M629 445.5h1M629.5 449v2M629 455.5h1M630 431.5h1M630 435.5h1M630 438.5h1M630 442.5h1M630 446.5h1M630 451.5h1M630.5 456v2M631 432.5h1M631 436.5h1M631 439.5h1M631 443.5h1M631.5 447v2M631.5 452v2M631.5 458v2M632 433.5h1M632 437.5h1M632 440.5h1M632 444.5h1M632 449.5h1M632 454.5h1M632 460.5h1M633 434.5h1M633 438.5h1M633 441.5h1M633 445.5h1M633 450.5h1M633 455.5h1M633 461.5h2M634 435.5h1M634 439.5h1M634 442.5h1M634 446.5h1M634 451.5h1M634 456.5h1M635 436.5h1M635 440.5h1M635 443.5h1M635 447.5h1M635 452.5h1M635 457.5h2M635 462.5h2M636 437.5h1M636 441.5h1M636 444.5h1M636.5 448v2M636 453.5h1M637 438.5h1M637 442.5h1M637 445.5h1M637 450.5h1M637 454.5h1M637 458.5h1M637 463.5h1M638 439.5h1M638 443.5h1M638 446.5h1M638 451.5h1M638 455.5h1M638 459.5h1M638 464.5h2M639 440.5h1M639 444.5h1M639 447.5h1M639 452.5h1M639 456.5h1M639 460.5h1M640 441.5h1M640 445.5h1M640 448.5h1M640 453.5h1M640 457.5h1M640 461.5h1M640 465.5h2M641 442.5h1M641 446.5h1M641 449.5h1M641 454.5h1M641 458.5h2M641 462.5h2M642 443.5h2M642 447.5h2M642 450.5h1M642 455.5h2M642 466.5h2M643 451.5h1M643 459.5h1M643 463.5h2M644 444.5h1M644 448.5h1M644 452.5h2M644 456.5h1M644 460.5h2M644 467.5h2M645 445.5h1M645 449.5h1M645 457.5h1M645 464.5h2M646 446.5h2M646 450.5h2M646 453.5h1M646 458.5h2M646 461.5h1M646 468.5h2M647 454.5h1M647 462.5h2M647 465.5h2M648 447.5h1M648 451.5h1M648 455.5h1M648 459.5h1M648 469.5h2M649 448.5h1M649 452.5h1M649 456.5h1M649 460.5h1M649 463.5h1M649 466.5h1M650 449.5h1M650 453.5h1M650 457.5h1M650 461.5h1M650 464.5h1M650 467.5h1M650 470.5h1M651 450.5h1M651 454.5h1M651 458.5h1M651 462.5h1M651 465.5h1M651 468.5h1M651 471.5h1M652 451.5h1M652 455.5h2M652 459.5h2M652 463.5h2M652 466.5h2M652 469.5h2M652 472.5h1M653 452.5h1M653 473.5h1M654 453.5h1M654 456.5h1M654 460.5h1M654 464.5h1M654 467.5h1M654 470.5h1M654 474.5h1M655 454.5h1M655 457.5h1M655 461.5h1M655 465.5h1M655 468.5h1M655 471.5h1M655 475.5h1M656 455.5h1M656 458.5h1M656 462.5h1M656 466.5h1M656 469.5h1M656 472.5h1M656 476.5h1M657 456.5h1M657 459.5h1M657 463.5h1M657 467.5h1M657 470.5h1M657 473.5h1M657 477.5h1M658 457.5h1M658 460.5h1M658 464.5h1M658 468.5h2M658 471.5h2M658 474.5h2M658 478.5h2M659 458.5h1M659 461.5h1M659 465.5h1M660 459.5h2M660 462.5h2M660 466.5h2M660 469.5h1M660 472.5h1M660 475.5h1M660 479.5h2M661 470.5h1M661 473.5h1M661 476.5h1M662 460.5h1M662 463.5h1M662 467.5h1M662 471.5h2M662 474.5h2M662 477.5h2M662 480.5h1M663 461.5h1M663 464.5h1M663 468.5h1M663 481.5h2M664 462.5h1M664 465.5h1M664 469.5h1M664 472.5h1M664 475.5h1M664 478.5h1M665 463.5h1M665 466.5h1M665 470.5h1M665 473.5h2M665 476.5h2M665 479.5h3M665 482.5h1M666 464.5h2M666 467.5h2M666 471.5h2M667 474.5h2M667 477.5h3M668 465.5h1M668 468.5h1M668 472.5h2M668 480.5h4M669 466.5h1M669 469.5h1M669 475.5h2M670 467.5h2M670 470.5h2M670 473.5h1M670 478.5h2M671 474.5h2M671 476.5h2M672 468.5h1M672 471.5h1M672 479.5h6M672 481.5h2M673 469.5h2M673 472.5h2M673 475.5h2M673 477.5h3M675 470.5h2M675 473.5h2M675 476.5h3M676 478.5h10M677 471.5h2M677 474.5h2M678 477.5h2M678 480.5h27M679 472.5h2M679 475.5h2M680 479.5h16M681 473.5h2M681 476.5h3M683 474.5h3M684 477.5h4M686 475.5h2M686 481.5h22M688 476.5h3M688 478.5h4M691 477.5h3M691 482.5h20M694 478.5h3M694 483.5h19M697 479.5h4M697 484.5h19M700 485.5h2M702 486.5h2M703 485.5h4M704 487.5h2M705 486.5h4M706 488.5h1M707 487.5h1M707 489.5h1M708 485.5h2M708 488.5h1M708 490.5h1M709 487.5h1M709 489.5h1M709 491.5h1M710 486.5h2M710 488.5h1M710 490.5h1M710.5 492v2M711 485.5h4M711 489.5h2M711 491.5h1M711 494.5h1M712 487.5h2M712 492.5h1M712 495.5h1M713 486.5h4M713 490.5h1M713 493.5h1M713 496.5h1M714 488.5h1M714 491.5h1M714 494.5h1M714 497.5h1M715 487.5h4M715 489.5h1M715 492.5h1M715 495.5h1M715 498.5h1M716 485.5h2M716 490.5h1M716 493.5h1M716 496.5h1M716.5 499v2M717 488.5h1M717 491.5h2M717 494.5h2M717 497.5h1M717 501.5h1M718 486.5h2M718 489.5h1M718 498.5h1M718 502.5h1M719 488.5h1M719 490.5h2M719 492.5h1M719 495.5h1M719 499.5h1M719 503.5h1M720 487.5h2M720 489.5h2M720 493.5h1M720 496.5h1M720 500.5h1M720.5 504v2M721 491.5h1M721 494.5h1M721 497.5h1M721 501.5h1M721 506.5h1M722 488.5h1M722 490.5h1M722 492.5h1M722 495.5h1M722 498.5h1M722 502.5h1M722 507.5h1M723 489.5h2M723 491.5h2M723 493.5h1M723 496.5h1M723 499.5h1M723 503.5h1M723 508.5h1M724 494.5h1M724 497.5h1M724 500.5h1M724 504.5h1M724 509.5h1M725 490.5h2M725 492.5h1M725 495.5h2M725 498.5h1M725 501.5h1M725 505.5h1M725 510.5h1M726 493.5h1M726 499.5h1M726.5 502v2M726.5 506v2M726 511.5h1M727 491.5h1M727 494.5h2M727 496.5h1M727 500.5h1M727 504.5h1M727 508.5h1M727 512.5h1M728 492.5h2M728 497.5h1M728 501.5h1M728 505.5h1M728 509.5h1M728 513.5h1M729 495.5h1M729 498.5h1M729 502.5h1M729 506.5h1M729 510.5h1M729 514.5h1M730 493.5h1M730 496.5h1M730 499.5h1M730 503.5h1M730 507.5h1M730 511.5h1M730 515.5h1M731 494.5h1M731 497.5h1M731 500.5h1M731 504.5h1M731 508.5h1M731 512.5h2M731 516.5h2M732 495.5h1M732 498.5h1M732 501.5h1M732 505.5h1M732 509.5h1M733 496.5h2M733 499.5h2M733 502.5h2M733 506.5h2M733 510.5h2M733 513.5h1M733 517.5h1M734 514.5h1M734 518.5h1M735 497.5h1M735 500.5h1M735 503.5h1M735 507.5h1M735 511.5h1M735 515.5h2M735 519.5h2M736 498.5h1M736 501.5h1M736 504.5h1M736 508.5h1M736 512.5h1M737 499.5h1M737 502.5h1M737 505.5h1M737 509.5h1M737 513.5h1M737 516.5h1M737 520.5h1M738 500.5h1M738 503.5h1M738 506.5h1M738 510.5h1M738 514.5h1M738 517.5h1M738 521.5h2M739 501.5h2M739 504.5h1M739 507.5h1M739 511.5h2M739 515.5h2M739 518.5h2M740 505.5h2M740 508.5h2M740 522.5h2M741 502.5h1M741 512.5h1M741 516.5h2M741 519.5h2M742 503.5h2M742 506.5h1M742 509.5h1M742 513.5h2M742 523.5h2M743 507.5h1M743 510.5h1M743 517.5h2M743 520.5h2M744 504.5h1M744 508.5h2M744 511.5h2M744 514.5h1M744 524.5h2M745 505.5h2M745 515.5h2M745 518.5h2M745 521.5h2M746 509.5h1M746 512.5h1M746 525.5h2M747 506.5h1M747 510.5h1M747 513.5h1M747 516.5h2M747 519.5h2M747 522.5h5M748 507.5h2M748 511.5h2M748 514.5h2M749 517.5h2M749 520.5h3M750 508.5h1M750 512.5h2M750 515.5h2M751 509.5h1M751 518.5h2M752 510.5h2M752 513.5h1M752 516.5h1M752 521.5h2M752 523.5h34M753 514.5h2M753 517.5h2M753 519.5h2M754 511.5h1M754 522.5h6M755 512.5h2M755 515.5h2M755 518.5h3M755 520.5h3M757 513.5h2M757 516.5h2M758 519.5h4M758 521.5h4M759 514.5h2M759 517.5h2M761 515.5h2M761 518.5h2M762 520.5h8M762 522.5h6M763 516.5h2M763 519.5h3M765 517.5h3M766 521.5h8M768 518.5h2M768 524.5h13M770 519.5h3M770 522.5h12M772 525.5h12M773 520.5h3M774 526.5h12M776 521.5h2M776 527.5h1M777 528.5h2M778 527.5h2M779 529.5h1M780 528.5h2M780 530.5h2M781 527.5h2M782 524.5h7M782 529.5h2M782 531.5h2M783 528.5h2M784 527.5h5M784 530.5h1M784 532.5h1M785 529.5h2M785 531.5h2M785 533.5h2M786 525.5h6M786 528.5h6M787 530.5h2M787 532.5h2M787 534.5h2M789 526.5h2M789 529.5h2M789 531.5h3M789 533.5h3M789 535.5h3M791 527.5h2M791 530.5h2M792 526.5h3M792 529.5h7M792 532.5h7M792 534.5h3M792 536.5h3M793 528.5h2M793 531.5h2M795 527.5h3M795 530.5h3M795 533.5h14M795 535.5h6M795 537.5h2M798 528.5h3M798 531.5h3M799 530.5h8M799 534.5h12M801 529.5h2M801 532.5h2M801 536.5h3M803 531.5h8M803 535.5h2M807 532.5h9M811 533.5h3M811 535.5h1M816 533.5h1M885 497.5h2M887 498.5h3M895 499.5h2M895 500.5h4M899 501.5h2M901 502.5h4M903 500.5h1M904 501.5h3M904 504.5h1M905 505.5h2M906 502.5h1M907 504.5h1M907 506.5h1M908 503.5h3M908 505.5h2M908 507.5h1M909 508.5h1M910 504.5h3M910 506.5h1M910 509.5h1M911 502.5h1M911 505.5h1M911 507.5h1M911.5 510v2M912 503.5h3M912 506.5h1M912.5 508v2M912 512.5h1M913 505.5h1M913 507.5h1M913 510.5h1M913 513.5h1M914 504.5h3M914 506.5h1M914 508.5h1M914 511.5h1M914.5 514v2M915 507.5h2M915 509.5h1M915 512.5h1M915 516.5h1M916 505.5h3M916 510.5h1M916.5 513v2M916 517.5h1M917 508.5h1M917 511.5h1M917 515.5h1M917.5 518v2M918 504.5h2M918 506.5h3M918 509.5h1M918 512.5h1M918 516.5h1M918 520.5h1M919 507.5h1M919 510.5h1M919 513.5h1M919 517.5h1M919 521.5h1M920 505.5h2M920 508.5h1M920 511.5h1M920 514.5h1M920 518.5h1M920.5 522v2M921 507.5h2M921 509.5h2M921 512.5h1M921 515.5h1M921 519.5h1M921 524.5h1M922 506.5h2M922 513.5h1M922.5 516v2M922.5 520v2M922 525.5h1M923 508.5h1M923 510.5h1M923 514.5h1M923 518.5h1M923 522.5h1M923 526.5h1M924 507.5h2M924 509.5h2M924 511.5h1M924 515.5h1M924 519.5h1M924 523.5h1M924.5 527v2M925 512.5h1M925 516.5h1M925 520.5h1M925 524.5h1M925 529.5h1M926 508.5h1M926 510.5h1M926 513.5h1M926 517.5h1M926 521.5h1M926 525.5h1M926 530.5h1M927 509.5h2M927 511.5h1M927 514.5h1M927 518.5h1M927 522.5h1M927 526.5h1M927 531.5h2M928 512.5h1M928 515.5h1M928 519.5h1M928 523.5h1M928 527.5h1M929 510.5h1M929 513.5h2M929 516.5h1M929 520.5h2M929 524.5h2M929 528.5h2M929 532.5h2M930 511.5h1M930 517.5h1M931 512.5h2M931 514.5h1M931 518.5h1M931 521.5h1M931 525.5h1M931 529.5h1M931 533.5h1M932 515.5h1M932 519.5h1M932 522.5h1M932 526.5h1M932 530.5h1M932 534.5h2M933 513.5h1M933 516.5h1M933 520.5h1M933 523.5h1M933 527.5h1M933 531.5h1M934 514.5h1M934 517.5h1M934 521.5h1M934 524.5h1M934 528.5h1M934 532.5h2M934 535.5h2M935 515.5h1M935 518.5h1M935 522.5h2M935 525.5h2M935 529.5h2M936 516.5h2M936 519.5h2M936 533.5h2M936 536.5h3M937 523.5h1M937 526.5h1M937 530.5h2M938 517.5h1M938 520.5h1M938 524.5h2M938 527.5h2M938 534.5h2M939 518.5h1M939 521.5h1M939 531.5h2M939 537.5h3M940 519.5h2M940 522.5h2M940 525.5h1M940 528.5h1M940 535.5h2M941 526.5h2M941 529.5h2M941 532.5h2M942 520.5h1M942 523.5h1M942 536.5h4M942 538.5h6M943 521.5h1M943 524.5h1M943 527.5h1M943 530.5h2M943 533.5h2M944 522.5h2M944 525.5h2M944 528.5h2M945 531.5h2M945 534.5h3M946 523.5h2M946 526.5h2M946 529.5h2M946 537.5h4M947 532.5h2M948 524.5h1M948 527.5h1M948 530.5h1M948 535.5h2M948 539.5h4M949 525.5h2M949 528.5h2M949 531.5h2M949 533.5h2M950 536.5h4M950 538.5h6M951 526.5h1M951 529.5h2M951 532.5h2M951 534.5h2M952 527.5h2M953 530.5h2M953 533.5h3M953 535.5h3M954 528.5h2M954 537.5h10M955 531.5h2M956 529.5h1M956 534.5h2M956 536.5h2M956 539.5h44M957 530.5h2M957 532.5h2M958 535.5h4M958 538.5h30M959 531.5h2M959 533.5h2M961 532.5h3M961 534.5h3M962 536.5h10M964 533.5h2M964 535.5h2M966 534.5h4M966 537.5h16M970 535.5h4M974 536.5h4M978 540.5h22M982 541.5h11M988 542.5h5" stroke="#00ff00" stroke-width="1" fill="none"/>
<path d="M0 573.5h21M0 574.5h3M0 576.5h19M0 577.5h15M0 578.5h11M0 579.5h7M0 580.5h2M2 575.5h31M3 572.5h2M7 574.5h38M85 586.5h2M86 585.5h4M88 584.5h4M90 583.5h1M91 582.5h2M92 583.5h8M93 581.5h2M93 584.5h3M95 580.5h3M95 582.5h14M97 581.5h2M98 579.5h7M99 580.5h2M100 581.5h17M101 578.5h28M102 583.5h3M104 580.5h17M105 577.5h28M107 579.5h18M109 576.5h27M110 582.5h3M113 575.5h26M117 574.5h11M123 573.5h8M127 572.5h6M129 571.5h7M129 574.5h12M131 570.5h1M132 569.5h2M133 570.5h2M133 573.5h12M134 568.5h1M135 567.5h2M135 569.5h2M136 570.5h2M136 572.5h2M137 566.5h2M137 568.5h2M138 569.5h2M138 571.5h2M139 565.5h1M139 567.5h1M139 572.5h5M140 564.5h2M140 566.5h2M140 568.5h2M140 570.5h2M141 571.5h6M142 563.5h3M142 565.5h3M142 567.5h2M142 569.5h2M144 566.5h3M144 568.5h3M144 570.5h2M145 562.5h4M145 564.5h4M145 572.5h4M146 569.5h2M147 565.5h3M147 567.5h7M147 570.5h3M148 568.5h2M149 561.5h7M149 563.5h13M149 571.5h4M150 564.5h4M150 566.5h3M150 569.5h3M153 565.5h3M153 568.5h3M153 570.5h3M154 562.5h7M154 566.5h7M156 560.5h10M156 564.5h2M156 567.5h2M156 569.5h2M158 561.5h6M158 565.5h6M158 568.5h3M161 559.5h8M161 564.5h5M161 567.5h3M162 562.5h10M164 558.5h4M164 563.5h5M164 566.5h2M166 557.5h4M166 561.5h8M166 565.5h3M168 556.5h4M169 558.5h2M169 560.5h2M169 564.5h3M170 555.5h1M171 554.5h1M171 557.5h2M171 559.5h2M172 553.5h2M172 555.5h1M172 560.5h5M172 563.5h2M173 554.5h2M173 556.5h2M173 558.5h2M174 552.5h1M174 559.5h2M174 562.5h3M175 551.5h1M175 553.5h1M175 555.5h1M175 557.5h1M176 550.5h1M176 552.5h2M176 554.5h2M176 556.5h2M176 558.5h2M177 549.5h1M177 559.5h2M177 561.5h2M178 548.5h2M178 551.5h1M178 553.5h2M178 555.5h2M178 557.5h2M179 550.5h1M179 558.5h2M179 560.5h2M180 547.5h1M180 549.5h2M180 552.5h1M180 554.5h1M180 556.5h1M181 546.5h1M181 551.5h2M181 553.5h2M181 555.5h2M181 557.5h2M181 559.5h2M182 545.5h1M182 548.5h1M183 544.5h2M183 547.5h2M183 550.5h1M183 552.5h2M183 554.5h2M183 556.5h2M183 558.5h2M184 549.5h2M185 543.5h3M185 546.5h2M185 551.5h2M185 553.5h2M185 555.5h2M185 557.5h2M186 548.5h2M187 545.5h2M187 550.5h2M187 552.5h2M187 554.5h2M187 556.5h2M188 542.5h2M188 547.5h1M189 544.5h2M189 546.5h2M189 549.5h2M189 551.5h2M189 553.5h2M189 555.5h2M190 541.5h2M191 543.5h5M191 545.5h3M191 548.5h2M191 550.5h2M191 552.5h2M191 554.5h2M193 547.5h2M193 549.5h2M193 551.5h2M193 553.5h2M194 544.5h4M195 546.5h2M195 548.5h2M195 550.5h2M195 552.5h2M196 542.5h5M197 545.5h2M197 547.5h2M197 549.5h2M197 551.5h2M198 543.5h3M199 544.5h2M199 546.5h6M199 548.5h4M199 550.5h4M203 547.5h4M203 549.5h4M205 545.5h4M207 546.5h2M207 548.5h6M213 547.5h4M232 554.5h1M233 553.5h2M235 552.5h2M237 551.5h1M238 550.5h2M240 549.5h1M240.5 551v2M241 548.5h2M241 550.5h2M241 552.5h1M242 551.5h3M243 547.5h2M243 549.5h2M244 550.5h4M245 546.5h2M245 548.5h2M246 549.5h4M247 545.5h2M247 547.5h2M248 548.5h4M249 544.5h1M249 546.5h1M249 550.5h7M249 551.5h3M250.5 542v2M250 545.5h1M250 547.5h1M251 541.5h1M251 544.5h1M251 546.5h1M251 549.5h4M252 540.5h1M252 543.5h1M252 545.5h2M252 547.5h2M253.5 538v2M253.5 541v2M253 548.5h4M254 537.5h1M254 540.5h1M254 544.5h1M254 546.5h1M255 536.5h1M255 539.5h1M255 543.5h1M255 545.5h2M255 547.5h3M256.5 534v2M256 538.5h1M256 542.5h1M256 549.5h2M257 533.5h1M257 537.5h1M257 541.5h1M257 544.5h1M257 546.5h3M258.5 531v2M258 536.5h1M258 540.5h1M258 543.5h1M258 545.5h1M258 548.5h2M259 530.5h1M259.5 534v2M259 539.5h1M259 542.5h1M259 544.5h1M260 529.5h1M260 533.5h1M260 538.5h1M260 541.5h1M260 543.5h2M260 545.5h2M260 547.5h2M261.5 527v2M261 532.5h1M261.5 536v2M261 540.5h1M262 526.5h1M262 531.5h1M262 535.5h1M262 539.5h1M262 542.5h1M262 544.5h1M262 546.5h1M263 525.5h1M263.5 529v2M263 534.5h1M263 538.5h1M263 541.5h1M263 543.5h2M263 545.5h2M264.5 523v2M264 528.5h1M264 533.5h1M264 537.5h1M264 540.5h1M265 522.5h2M265 527.5h1M265 532.5h1M265 536.5h1M265 539.5h1M265 542.5h1M265 544.5h1M266 526.5h2M266 531.5h1M266 535.5h1M266 538.5h1M266 541.5h1M266 543.5h2M267 521.5h3M267 530.5h1M267 534.5h1M267 537.5h1M267 540.5h1M268 525.5h2M268 529.5h2M268 533.5h2M268 536.5h2M268 539.5h2M268 542.5h1M269 541.5h1M270 520.5h2M270 524.5h1M270 528.5h1M270 532.5h1M270 535.5h1M270 538.5h1M270 540.5h2M271 523.5h2M271 527.5h1M271 531.5h1M271 534.5h1M271 537.5h1M272 519.5h2M272 526.5h1M272 530.5h1M272 533.5h1M272 536.5h1M272 539.5h1M273 522.5h1M273 525.5h3M273 529.5h2M273 532.5h1M273 535.5h1M273 538.5h1M274 531.5h2M274 534.5h2M274 537.5h2M275 528.5h2M276 524.5h4M276 530.5h2M276 533.5h2M276 536.5h2M277 527.5h2M278 529.5h1M278 532.5h1M278 535.5h1M279 526.5h2M279 528.5h2M279 531.5h2M279 534.5h2M280 523.5h2M281 525.5h9M281 527.5h5M281 530.5h2M281 533.5h2M283 529.5h3M283 532.5h2M285 531.5h2M286 526.5h4M286 528.5h2M287 530.5h2M288 527.5h6M289 529.5h3M292 528.5h4M294 526.5h5M296 527.5h11M322 531.5h2M324 530.5h2M326 529.5h2M328 528.5h22M330 527.5h24M330 529.5h5M332 526.5h26M335 525.5h27M337 524.5h28M338 529.5h5M343 523.5h25M352 522.5h7M356 521.5h2M357 520.5h3M358 519.5h1M359.5 517v2M359 521.5h2M360 516.5h1M360 519.5h1M360 522.5h4M361 515.5h1M361 518.5h1M361 520.5h2M362 514.5h1M362 517.5h1M362 521.5h4M363 513.5h1M363 516.5h1M363 519.5h1M364 512.5h1M364 515.5h1M364 518.5h1M364 520.5h1M365 511.5h1M365 514.5h1M365 517.5h1M365 519.5h1M365 522.5h2M366 510.5h1M366 513.5h1M366 516.5h1M366 518.5h2M366 520.5h2M367.5 508v2M367 512.5h1M367 515.5h1M367 521.5h2M368 507.5h1M368 511.5h1M368 514.5h1M368 517.5h1M368 519.5h1M368 522.5h2M369 506.5h1M369 510.5h1M369 513.5h1M369 516.5h1M369 518.5h2M369 520.5h2M370 505.5h1M370 509.5h1M370 512.5h1M370 515.5h1M370 521.5h2M371.5 503v2M371 508.5h1M371 511.5h1M371 514.5h1M371 517.5h1M371 519.5h1M372.5 501v2M372.5 506v2M372.5 509v2M372 513.5h1M372 516.5h1M372 518.5h1M372 520.5h2M373.5 499v2M373.5 504v2M373 508.5h1M373 512.5h1M373 515.5h1M373 517.5h1M374.5 497v2M374.5 502v2M374 507.5h1M374 511.5h1M374 514.5h1M374 516.5h2M374 519.5h1M375.5 495v2M375 501.5h1M375.5 505v2M375.5 509v2M375 513.5h1M375 518.5h1M376.5 493v2M376.5 499v2M376 504.5h1M376 508.5h1M376 512.5h1M376 515.5h1M376 517.5h2M377.5 491v2M377.5 497v2M377 503.5h1M377 507.5h1M377 511.5h1M377 514.5h1M378.5 489v2M378.5 495v2M378.5 501v2M378 506.5h1M378 510.5h1M378 513.5h1M378 516.5h1M379.5 487v2M379.5 493v2M379.5 499v2M379 505.5h1M379 509.5h1M379 512.5h1M379 515.5h1M380.5 485v2M380.5 491v2M380.5 497v2M380.5 503v2M380.5 507v2M380 511.5h1M380 514.5h1M381.5 482v3M381.5 489v2M381.5 495v2M381.5 501v2M381 506.5h1M381.5 509v2M381 513.5h1M382.5 479v3M382.5 487v2M382.5 493v2M382.5 499v2M382.5 504v2M382 508.5h1M382 512.5h1M383.5 477v2M383.5 484v3M383.5 491v2M383 498.5h1M383 503.5h1M383 507.5h1M383.5 510v2M384.5 474v3M384.5 482v2M384.5 489v2M384.5 496v2M384.5 501v2M384 506.5h1M384 509.5h1M385.5 471v3M385.5 480v2M385.5 487v2M385.5 494v2M385 500.5h1M385.5 504v2M385 508.5h1M386.5 469v2M386.5 478v2M386.5 485v2M386.5 492v2M386.5 498v2M386 503.5h1M386 507.5h1M387.5 465v4M387.5 475v3M387.5 483v2M387.5 490v2M387.5 496v2M387 502.5h1M387 506.5h1M388.5 461v4M388.5 471v4M388.5 480v3M388.5 488v2M388.5 494v2M388.5 500v2M388.5 504v2M389.5 457v4M389.5 468v3M389.5 477v3M389.5 485v3M389.5 492v2M389.5 498v2M389.5 502v2M390.5 453v4M390.5 464v4M390.5 474v3M390.5 482v3M390.5 490v2M390.5 496v2M390 501.5h1M391.5 449v4M391.5 461v3M391.5 471v3M391.5 480v2M391.5 487v3M391.5 494v2M391.5 499v2M392.5 445v4M392.5 457v4M392.5 468v3M392.5 477v3M392.5 485v2M392.5 492v2M392 498.5h1M393.5 441v4M393.5 454v3M393.5 465v3M393.5 474v3M393.5 483v2M393.5 490v2M393.5 496v2M394.5 437v4M394.5 450v4M394.5 462v3M394.5 472v2M394.5 481v2M394.5 488v2M394.5 494v2M395.5 432v5M395.5 446v4M395.5 458v4M395.5 469v3M395.5 478v3M395.5 486v2M395.5 492v2M396.5 426v6M396.5 441v5M396.5 454v4M396.5 465v4M396.5 475v3M396.5 484v2M396.5 490v2M397.5 420v6M397.5 437v4M397.5 450v4M397.5 462v3M397.5 472v3M397.5 481v3M397.5 488v2M398.5 415v5M398.5 432v5M398.5 446v4M398.5 458v4M398.5 469v3M398.5 479v2M398.5 486v2M399.5 409v6M399.5 427v5M399.5 442v4M399.5 455v3M399.5 466v3M399.5 476v3M399.5 484v2M400.5 403v6M400.5 422v5M400.5 438v4M400.5 452v3M400.5 463v3M400.5 473v3M400.5 482v2M401.5 398v5M401.5 417v5M401.5 434v4M401.5 448v4M401.5 460v3M401.5 471v2M401.5 480v2M402.5 392v6M402.5 413v4M402.5 430v4M402.5 445v3M402.5 457v3M402.5 468v3M402.5 478v2M403.5 386v6M403.5 408v5M403.5 426v4M403.5 441v4M403.5 454v3M403.5 466v2M403.5 476v2M404.5 380v6M404.5 402v6M404.5 420v6M404.5 437v4M404.5 450v4M404.5 462v4M404.5 473v3M405.5 372v8M405.5 395v7M405.5 414v6M405.5 431v6M405.5 446v4M405.5 458v4M405.5 469v4M406.5 365v7M406.5 389v6M406.5 408v6M406.5 426v5M406.5 441v5M406.5 454v4M406.5 465v4M407.5 358v7M407.5 382v7M407.5 402v6M407.5 421v5M407.5 436v5M407.5 450v4M407.5 462v3M408.5 350v8M408.5 375v7M408.5 396v6M408.5 415v6M408.5 432v4M408.5 446v4M408.5 458v4M409.5 343v7M409.5 368v7M409.5 390v6M409.5 410v5M409.5 427v5M409.5 442v4M409.5 455v3M410.5 336v7M410.5 362v6M410.5 384v6M410.5 405v5M410.5 422v5M410.5 438v4M410.5 451v4M411.5 328v8M411.5 355v7M411.5 378v6M411.5 399v6M411.5 418v4M411.5 434v4M411.5 447v4M412.5 321v7M412.5 348v7M412.5 372v6M412.5 393v6M412.5 413v5M412.5 429v5M412.5 443v4M413.5 313v8M413.5 340v8M413.5 365v7M413.5 387v6M413.5 407v6M413.5 424v5M413.5 439v4M414.5 305v8M414.5 333v7M414.5 358v7M414.5 381v6M414.5 401v6M414.5 418v6M414.5 434v5M415.5 297v8M415.5 325v8M415.5 351v7M415.5 374v7M415.5 395v6M415.5 413v5M415.5 429v5M416.5 289v8M416.5 318v7M416.5 344v7M416.5 368v6M416.5 389v6M416.5 408v5M416.5 425v4M417.5 281v8M417.5 310v8M417.5 337v7M417.5 361v7M417.5 383v6M417.5 403v5M417.5 420v5M418.5 273v8M418.5 303v7M418.5 330v7M418.5 355v6M418.5 377v6M418.5 397v6M418.5 415v5M419.5 265v8M419.5 295v8M419.5 323v7M419.5 349v6M419.5 371v6M419.5 392v5M419.5 411v4M420.5 258v7M420.5 288v7M420.5 316v7M420.5 342v7M420.5 365v6M420.5 386v6M420.5 406v5M421.5 252v6M421.5 281v7M421.5 309v7M421.5 335v7M421.5 359v6M421.5 380v6M421.5 400v6M422.5 246v6M422.5 275v6M422.5 303v6M422.5 329v6M422.5 353v6M422.5 374v6M422.5 394v6M423.5 240v6M423.5 268v7M423.5 296v7M423.5 322v7M423.5 346v7M423.5 368v6M423.5 389v5M424.5 233v7M424.5 261v7M424.5 289v7M424.5 315v7M424.5 340v6M424.5 362v6M424.5 383v6M425.5 227v6M425.5 254v7M425.5 282v7M425.5 308v7M425.5 333v7M425.5 356v6M425.5 378v5M426.5 221v6M426.5 248v6M426.5 276v6M426.5 302v6M426.5 327v6M426.5 350v6M426.5 372v6M427.5 215v6M427.5 241v7M427.5 269v7M427.5 295v7M427.5 321v6M427.5 344v6M427.5 366v6M428.5 211v4M428.5 236v5M428.5 263v6M428.5 289v6M428.5 315v6M428.5 339v5M428.5 361v5M429.5 209v2M429.5 233v3M429.5 259v4M429.5 284v5M429.5 309v6M429.5 333v6M429.5 355v6M430 208.5h1M430.5 230v3M430.5 255v4M430.5 279v5M430.5 304v5M430.5 327v6M430.5 349v6M431 207.5h1M431.5 227v3M431.5 250v5M431.5 274v5M431.5 298v6M431.5 321v6M431.5 344v5M432.5 205v2M432.5 224v3M432.5 246v4M432.5 268v6M432.5 293v5M432.5 316v5M432.5 338v6M433 204.5h1M433.5 221v3M433.5 241v5M433.5 263v5M433.5 287v6M433.5 310v6M433.5 333v5M434 203.5h1M434.5 218v3M434.5 237v4M434.5 258v5M434.5 282v5M434.5 304v6M434.5 327v6M435.5 201v2M435.5 215v3M435.5 233v4M435.5 253v5M435.5 276v6M435.5 298v6M435.5 321v6M436 200.5h1M436.5 213v2M436.5 230v3M436.5 249v4M436.5 272v4M436.5 293v5M436.5 316v5M437.5 228v2M437.5 247v2M437.5 268v4M437.5 289v4M437.5 311v5M438 227.5h1M438.5 244v3M438.5 264v4M438.5 285v4M438.5 307v4M439 226.5h1M439.5 241v3M439.5 261v3M439.5 281v4M439.5 302v5M440.5 224v2M440.5 239v2M440.5 257v4M440.5 276v5M440.5 297v5M441 223.5h1M441.5 236v3M441.5 254v3M441.5 272v4M441.5 292v5M442 222.5h1M442.5 233v3M442.5 250v4M442.5 268v4M442.5 288v4M443.5 220v2M443.5 231v2M443.5 246v4M443.5 264v4M443.5 283v5M444 219.5h1M444.5 229v2M444.5 244v2M444.5 260v4M444.5 279v4M445 228.5h2M445.5 242v2M445.5 258v2M445.5 276v3M446 241.5h1M446.5 256v2M446.5 273v3M447 227.5h2M447.5 239v2M447.5 254v2M447.5 270v3M448 238.5h1M448.5 251v3M448.5 267v3M449 226.5h2M449 237.5h1M449.5 249v2M449.5 265v2M450.5 235v2M450.5 247v2M450.5 262v3M451 225.5h2M451 234.5h1M451.5 245v2M451.5 259v3M452.5 232v2M452.5 243v2M452.5 256v3M453 224.5h1M453 231.5h5M453.5 241v2M453.5 254v2M454 240.5h1M454.5 252v2M455 239.5h1M455.5 250v2M456 238.5h1M456.5 248v2M457 237.5h1M457 247.5h1M458 230.5h4M458 236.5h1M458.5 245v2M459 235.5h1M459.5 243v2M460 234.5h1M460.5 241v2M461 233.5h9M461 240.5h2M463 239.5h2M465 238.5h2M467 237.5h2M469 236.5h1M673 482.5h5M678 481.5h4M804 536.5h3M807 535.5h4M811 534.5h8M812 535.5h3M814 533.5h2M816 532.5h2M817 533.5h10M818 531.5h2M819 532.5h3M820 530.5h3M820 534.5h3M822 531.5h3M823 529.5h29M823 532.5h18M825 530.5h2M827 528.5h2M827 531.5h20M828 533.5h5M831 530.5h19M839 528.5h16M843 527.5h6M845 526.5h2M846 525.5h2M847.5 523v2M848 522.5h1M848 524.5h1M848 526.5h3M849 521.5h1M849 523.5h1M849 525.5h1M850 520.5h1M850 522.5h1M850 524.5h2M850 527.5h8M851.5 518v2M851 521.5h1M851 525.5h2M852 517.5h1M852 520.5h1M852 523.5h1M852 526.5h2M853 516.5h1M853 519.5h1M853 522.5h1M853 524.5h1M854 515.5h1M854 518.5h1M854 521.5h1M854 523.5h2M854 525.5h2M855 514.5h1M855 517.5h1M855 520.5h1M855 526.5h2M856 513.5h1M856 516.5h2M856 519.5h2M856 522.5h1M856 524.5h2M857 512.5h1M857 521.5h1M857 525.5h2M858 511.5h1M858 515.5h1M858 518.5h1M858 520.5h2M858 523.5h1M858 526.5h2M859 510.5h1M859 514.5h1M859 517.5h1M859 522.5h2M859 524.5h2M860 509.5h1M860 513.5h1M860 516.5h1M860 519.5h1M860 525.5h2M861 508.5h1M861 512.5h1M861 515.5h1M861 518.5h1M861 521.5h1M861 523.5h1M862 507.5h1M862 511.5h1M862 514.5h1M862 517.5h1M862 520.5h2M862 522.5h2M862 524.5h2M863 506.5h1M863 510.5h1M863 513.5h1M863 516.5h1M864 505.5h2M864 509.5h1M864 512.5h2M864 515.5h2M864 519.5h1M864 521.5h1M864 523.5h2M865 508.5h1M865 518.5h1M865 520.5h1M866 504.5h1M866 507.5h1M866 511.5h1M866 514.5h1M866 517.5h2M866 519.5h2M866 522.5h1M867 503.5h1M867 506.5h1M867 510.5h1M867 513.5h1M867 521.5h2M868 502.5h1M868 505.5h1M868 509.5h1M868 512.5h1M868 516.5h1M868 518.5h1M869 501.5h2M869 504.5h2M869 508.5h1M869 511.5h1M869 515.5h1M869 517.5h1M869 520.5h1M870 507.5h2M870 510.5h2M870 514.5h1M870 516.5h2M870 519.5h2M871 500.5h2M871 503.5h2M871 513.5h1M872 506.5h1M872 509.5h1M872 512.5h2M872 515.5h1M872 518.5h1M873 499.5h2M873 502.5h2M873 505.5h1M873 508.5h1M873 514.5h1M873 517.5h1M874 504.5h2M874 507.5h2M874 511.5h1M874 513.5h2M874 516.5h2M875 498.5h2M875 501.5h2M875 510.5h1M876 503.5h1M876 506.5h1M876 509.5h1M876 512.5h1M876 515.5h1M877 497.5h1M877 500.5h3M877 502.5h3M877 505.5h2M877 508.5h2M877 511.5h1M877 514.5h1M878 510.5h2M878 513.5h2M879 504.5h2M879 507.5h2M880 499.5h4M880 501.5h4M880 509.5h2M880 512.5h2M881 503.5h2M881 506.5h2M882 508.5h1M882 511.5h1M883 502.5h2M883 505.5h2M883 507.5h2M883 510.5h2M884 498.5h2M884 500.5h11M885 501.5h5M885 504.5h2M885 506.5h2M885 509.5h2M887 503.5h3M887 505.5h3M887 508.5h2M889 507.5h2M890 499.5h5M890 502.5h3M890 504.5h3M891 506.5h2M893 501.5h6M893 503.5h4M893 505.5h4M897 502.5h4M897 504.5h4M899 500.5h4M901 501.5h2M901 503.5h6M907 502.5h4M1000.5 537v4M1001.5 535v5M1002.5 533v2M1002 536.5h1M1002 538.5h2M1002 539.5h1M1003.5 531v2M1003.5 534v2M1003 537.5h2M1004.5 529v2M1004 533.5h1M1004.5 535v2M1005.5 527v2M1005.5 531v2M1005 534.5h1M1005 536.5h2M1006.5 525v2M1006 530.5h1M1006 533.5h1M1007.5 523v2M1007.5 528v2M1007 532.5h1M1007 535.5h1M1008.5 521v2M1008 527.5h1M1008 531.5h1M1008 534.5h1" stroke="#ff0000" stroke-width="1" fill="none"/>
<rect x="429" y="47" width="3" height="1" fill="#c0c0c0"/>
<rect x="428" y="48" width="1" height="3" fill="#c0c0c0"/>
<rect x="428" y="49" width="4" height="1" fill="#c0c0c0"/>
<rect x="432" y="50" width="3" height="1" fill="#c0c0c0"/>
<rect x="435" y="51" width="3" height="1" fill="#c0c0c0"/>
<rect x="438" y="52" width="2" height="1" fill="#c0c0c0"/>
<rect x="429" y="51" width="1" height="1" fill="#c0c0c0"/>
<rect x="430" y="52" width="1" height="1" fill="#c0c0c0"/>
<rect x="77" y="165" width="12" height="1" fill="#c0c0c0"/>
<rect x="78" y="164" width="1" height="1" fill="#c0c0c0"/>
<rect x="79" y="163" width="1" height="1" fill="#c0c0c0"/>
<rect x="80" y="162" width="1" height="1" fill="#c0c0c0"/>
<rect x="78" y="166" width="1" height="1" fill="#c0c0c0"/>
<rect x="79" y="167" width="1" height="1" fill="#c0c0c0"/>
<rect x="80" y="168" width="1" height="1" fill="#c0c0c0"/>
<path d="M1009.5 32.5L1014.5 37.5L1009.5 42.5L1004.5 37.5Z" stroke="#808080" fill="none"/>
<rect x="1022.5" y="32.5" width="11" height="10" rx="2.5" ry="2.5" stroke="#787878" stroke-width="1.4" fill="none" shape-rendering="auto"/>
<rect x="1029" y="34" width="3" height="7" fill="#808080"/>
<circle cx="69" cy="37" r="6" fill="#808080" shape-rendering="auto"/>
<path d="M65.5 35.5L69 39L72.5 35.5" stroke="#1a1a1a" stroke-width="1.3" fill="none" shape-rendering="auto"/>
<path d="M611 171H617L614 168Z" fill="#ff0000"/>
</svg>
<div id="txt">
<div class="t tb" style="left:-5px">分钟</div>
<div class="t tb" style="left:27px">5分钟</div>
<div class="t tb" style="left:67px">15分钟</div>
<div class="t tb" style="left:113px">30分钟</div>
<div class="t tb" style="left:158px">60分钟</div>
<div class="t tb cy" style="left:205px">日线</div>
<div class="t tb" style="left:239px">周线</div>
<div class="t tb" style="left:273px">月线</div>
<div class="t tb" style="left:306px">多周期</div>
<div class="t tb" style="left:349px">更多<span style="margin-left:2px">&gt;</span></div>
<div class="t tb" style="left:814px">复权</div>
<div class="t tb" style="left:848px">叠加</div>
<div class="t tb" style="left:883px">统计</div>
<div class="t tb" style="left:918px">画线</div>
<div class="t tb" style="left:955px;top:10px">F10</div>
<div class="t tb" style="left:988px">标记</div>
<div class="t tb" style="left:1021px">+自</div>
<div class="t" style="left:-8px;top:31px;color:#c8c8c8">日线.前复权)</div>
<div class="n" style="left:4px;top:181px;color:#ff0000">17.79</div>
<div class="n" style="left:45px;top:181px;color:#ff0000">:</div>
<div class="n" style="left:51px;top:181px;color:#ff0000">17.66</div>
<div class="n" style="left:92px;top:181px;color:#ff0000">:</div>
<div class="n" style="left:98px;top:181px;color:#ff0000">17.56</div>
<div class="n" style="left:139px;top:181px;color:#ff0000">:</div>
<div class="n" style="left:145px;top:181px;color:#ff0000">17.49</div>
<div class="n" style="left:186px;top:181px;color:#ff0000">:</div>
<div class="n" style="left:191px;top:181px;color:#ff0000">17.44</div>
<div class="n" style="left:233px;top:181px;color:#ff0000">:</div>
<div class="n" style="left:238px;top:181px;color:#ff0000">17.40</div>
<div class="n" style="left:280px;top:181px;color:#ff0000">:</div>
<div class="n" style="left:285px;top:181px;color:#ff0000">17.38</div>
<div class="n" style="left:443px;top:47px;color:#c0c0c0">33.44</div>
<div class="n" style="left:441px;top:69px;color:#c0c0c0">27.76 - 27.75</div>
<div class="n" style="left:90px;top:160px;color:#c0c0c0">15.61</div>
<div class="b" style="left:412px;background:#800000">涨</div>
<div class="b" style="left:428px;background:#a05000">榜</div>
<div class="b" style="left:534px;background:#003070">财</div>
<div class="b" style="left:543px;background:#008000">跌</div>
<div class="n" style="left:610px;top:169px;color:#ff0000;font-weight:bold;font-size:11px">$</div>
</div>
</body></html>
